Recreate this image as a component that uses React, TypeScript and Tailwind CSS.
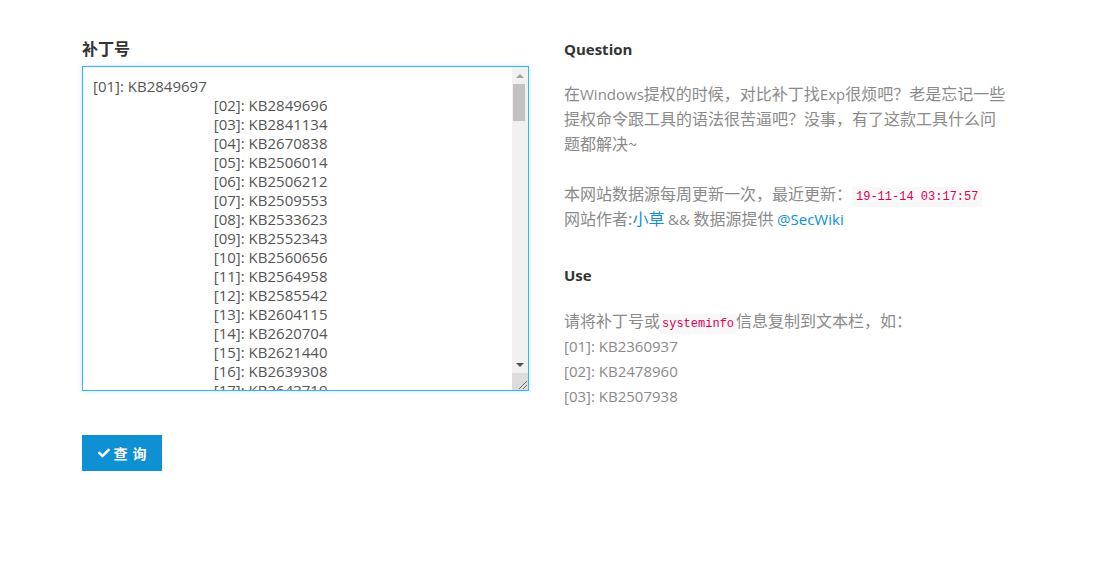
import { FaCheck } from 'react-icons/fa';

const kbList = [
  'KB2849697', 'KB2849696', 'KB2841134', 'KB2670838', 'KB2506014', 'KB2506212',
  'KB2509553', 'KB2533623', 'KB2552343', 'KB2560656', 'KB2564958', 'KB2585542',
  'KB2604115', 'KB2620704', 'KB2621440', 'KB2639308', 'KB2643719', 'KB2653956',
  'KB2654428', 'KB2656356', 'KB2667402', 'KB2676562', 'KB2685811', 'KB2685813',
  'KB2685939', 'KB2690533', 'KB2698365', 'KB2705219', 'KB2706045', 'KB2712808',
  'KB2718704', 'KB2727528', 'KB2729094', 'KB2729452', 'KB2731771', 'KB2732059',
  'KB2736422', 'KB2742599', 'KB2750841', 'KB2758857', 'KB2761217', 'KB2763523',
  'KB2770660', 'KB2773072', 'KB2786081', 'KB2789645', 'KB2791765', 'KB2798162',
  'KB2799926', 'KB2800095', 'KB2807986', 'KB2808679', 'KB2813347', 'KB2813430',
  'KB2820331', 'KB2834140', 'KB2836942', 'KB2836943', 'KB2839894', 'KB2840149',
  'KB2840631', 'KB2843630', 'KB2847927', 'KB2852386', 'KB2853952', 'KB2857650',
  'KB2861698', 'KB2862152', 'KB2862330', 'KB2862335', 'KB2864202', 'KB2868038',
  'KB2871997', 'KB2872339', 'KB2882822', 'KB2888049', 'KB2891804', 'KB2892074',
  'KB2893294', 'KB2893519', 'KB2894844', 'KB2900986', 'KB2908783', 'KB2911501',
  'KB2912390', 'KB2918077', 'KB2919469', 'KB2923545', 'KB2931356', 'KB2937610',
  'KB2939576', 'KB2957189', 'KB2965788', 'KB2966583', 'KB2968294', 'KB2970228',
  'KB2972100', 'KB2972211', 'KB2973112', 'KB2973201', 'KB2977292', 'KB2978120',
  'KB2978742', 'KB2984972', 'KB2985461', 'KB2991963', 'KB2992611', 'KB3003743',
  'KB3004361', 'KB3004375', 'KB3006121', 'KB3006137', 'KB3010788', 'KB3011780',
  'KB3013531', 'KB3019978', 'KB3020370', 'KB3021674', 'KB3021952', 'KB3022777',
];

const indent = ' '.repeat(31);

const patchText = kbList
  .map((kb, i) => {
    const num = String(i + 1).padStart(2, '0');
    return (i === 0 ? '' : indent) + '[' + num + ']: ' + kb;
  })
  .join('\n');

// 英文部分用 Open Sans
function En({ children }: { children: React.ReactNode }) {
  return <span className="font-['Open_Sans',sans-serif] text-[15px] leading-none">{children}</span>;
}

export default function App() {
  return (
    <div className="w-full min-h-screen bg-white font-['Open_Sans','Noto_Sans_CJK_SC',sans-serif]">
      <div className="flex flex-row gap-[35px] pl-[82px] pt-[37px]">
        {/* 左边：补丁号输入 */}
        <div className="w-[447px] flex flex-col">
          <p className="text-[16px] leading-[24px] font-bold text-[#333] mb-[5px]">补丁号</p>
          <div className="relative w-[447px] h-[325px]">
            <textarea
              defaultValue={patchText}
              className="block w-[447px] h-[325px] border border-[#3bb4f2] shadow-[0_0_5px_rgba(59,180,242,0.3)] outline-none pt-[10px] pl-[10px] pr-[20px] text-[15px] leading-[19px] text-[#555] font-['Open_Sans','Noto_Sans_CJK_SC',sans-serif] overflow-y-scroll resize-none"
            />
            {/* 滚动条 */}
            <div className="absolute top-[1px] right-[1px] bottom-[1px] w-[16px] flex flex-col bg-[#f1f1f1] pointer-events-none">
              <div className="h-[17px] flex items-center justify-center">
                <span className="w-0 h-0 border-x-[4px] border-x-transparent border-b-[4px] border-b-[#a3a3a3]" />
              </div>
              <div className="flex-1">
                <div className="h-[37px] ml-[1px] mr-[3px] bg-[#c1c1c1]" />
              </div>
              <div className="h-[17px] flex items-center justify-center">
                <span className="w-0 h-0 border-x-[4px] border-x-transparent border-t-[4px] border-t-[#505050]" />
              </div>
              <div className="h-[17px] bg-[#dcdcdc] flex items-end justify-end">
                <svg width="14" height="14" viewBox="0 0 14 14">
                  <path d="M13 5 L5 13 M13 9 L9 13" stroke="#6e6e6e" strokeWidth="1" />
                </svg>
              </div>
            </div>
          </div>
          <div className="mt-[44px]">
            <button className="bg-[#0e90d2] w-[80px] h-[36px] flex flex-row items-center justify-center gap-[4px] text-white">
              <FaCheck className="w-[12px] h-[12px]" />
              <span className="text-[14px] font-bold tracking-[5px] mr-[-5px]">查询</span>
            </button>
          </div>
        </div>

        {/* 右边：说明 */}
        <div className="w-[443px] flex flex-col text-[16px] leading-[25px] text-[#8a8a8a] font-['Noto_Sans_CJK_SC',sans-serif]">
          <h3 className="text-[15px] leading-[25px] font-bold text-[#333] font-['Open_Sans',sans-serif]">Question</h3>
          <p className="mt-[19px]">
            在<En>Windows</En>提权的时候，对比补丁找<En>Exp</En>很烦吧？老是忘记一些提权命令跟工具的语法很苦逼吧？没事，有了这款工具什么问题都解决~
          </p>
          <p className="mt-[25px]">
            本网站数据源每周更新一次，最近更新：
            <code className="bg-[#f8f8f8] text-[#dd0055] text-[12px] leading-none px-[4px] py-[3px] font-['Liberation_Mono',monospace]">19-11-14 03:17:57</code>
            <br />
            网站作者:<a className="text-[#0e90d2]">小草</a> <En>&amp;&amp;</En> 数据源提供 <a className="text-[#0e90d2]"><En>@SecWiki</En></a>
          </p>
          <h3 className="mt-[32px] text-[15px] leading-[25px] font-bold text-[#333] font-['Open_Sans',sans-serif]">Use</h3>
          <p className="mt-[20px]">
            请将补丁号或
            <code className="bg-[#f8f8f8] text-[#dd0055] text-[12px] leading-none px-[2px] py-[3px] font-['Liberation_Mono',monospace]">systeminfo</code>
            信息复制到文本栏，如：
            <br />
            <En>[01]: KB2360937</En>
            <br />
            <En>[02]: KB2478960</En>
            <br />
            <En>[03]: KB2507938</En>
          </p>
        </div>
      </div>
    </div>
  );
}
